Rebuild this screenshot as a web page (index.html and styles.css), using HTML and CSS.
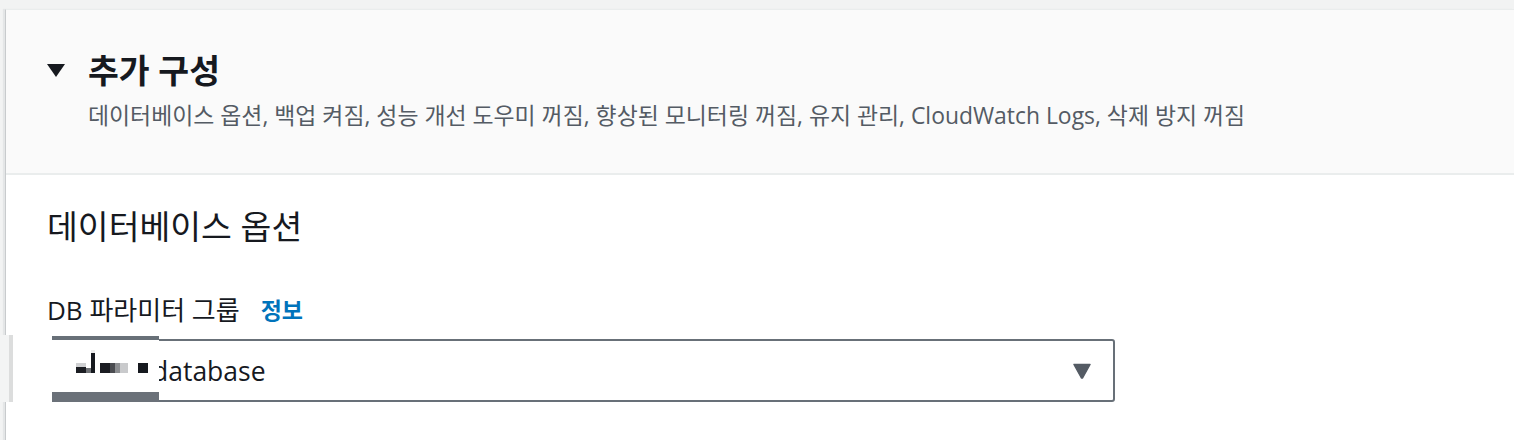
FILE: index.html
```html
<!DOCTYPE html>
<html lang="ko">
<head>
<meta charset="utf-8">
<title>추가 구성</title>
<link rel="stylesheet" href="styles.css">
</head>
<body>
<div class="page">
  <section class="panel">
    <header class="panel-header">
      <div class="title-row">
        <span class="caret" aria-hidden="true"></span>
        <h2 class="title">추가 구성</h2>
      </div>
      <p class="subtitle">데이터베이스 옵션, 백업 켜짐, 성능 개선 도우미 꺼짐, 향상된 모니터링 꺼짐, 유지 관리, CloudWatch Logs, 삭제 방지 꺼짐</p>
    </header>
    <div class="panel-body">
      <div class="edge-artifact" aria-hidden="true"></div>
      <h3 class="section-title">데이터베이스 옵션</h3>
      <div class="field-label">
        <span class="label-text">DB 파라미터 그룹</span>
        <a class="info-link">정보</a>
      </div>
      <div class="select">
        <span class="select-value">database</span>
        <svg class="select-caret" width="20" height="16" viewBox="0 0 20 16" aria-hidden="true">
          <path d="M2 1.5 H18 L10.8 14.5 Q10 15.6 9.2 14.5 Z" fill="#545b64" stroke="#545b64" stroke-width="1.5" stroke-linejoin="round"/>
        </svg>
        <div class="redact" aria-hidden="true">
          <svg width="107" height="66" viewBox="0 0 107 66">
            <rect x="0" y="0" width="107" height="4" fill="#687078"/>
            <rect x="0" y="56" width="107" height="10" fill="#6b7179"/>
            <rect x="24" y="27" width="10" height="4" fill="#cfd0d2"/>
            <rect x="24" y="31" width="10" height="6" fill="#1b1d22"/>
            <rect x="34" y="32" width="5" height="5" fill="#707276"/>
            <rect x="39" y="14" width="4" height="3" fill="#ececec"/>
            <rect x="39" y="17" width="4" height="20" fill="#16191f"/>
            <rect x="48" y="27" width="10" height="10" fill="#1b1d22"/>
            <rect x="58" y="27" width="5" height="10" fill="#4a4c50"/>
            <rect x="63" y="27" width="5" height="10" fill="#8c8e91"/>
            <rect x="68" y="27" width="8" height="10" fill="#c9cacc"/>
            <rect x="86" y="27" width="10" height="10" fill="#16191f"/>
          </svg>
        </div>
      </div>
    </div>
  </section>
</div>
</body>
</html>
```
FILE: styles.css
```css
* { box-sizing: border-box; }
html, body { margin: 0; padding: 0; }
body {
  background: #f2f3f3;
  font-family: "Open Sans", "Noto Sans CJK KR", sans-serif;
  color: #16191f;
  height: 440px;
  overflow: hidden;
}
.page {
  padding-top: 9px;
  padding-left: 5px;
}
.panel {
  background: #ffffff;
  border-top: 1px solid #eaeded;
  border-left: 1px solid #c8cbcd;
  box-shadow: -2px 0 1px #e4e6e7;
  min-height: 440px;
}
.panel-header {
  background: #fafafa;
  height: 165px;
  border-bottom: 2px solid #eaeded;
  padding: 40px 0 0 41px;
}
.title-row {
  display: flex;
  align-items: center;
  gap: 23px;
  height: 40px;
}
.caret {
  width: 0;
  height: 0;
  border-left: 9px solid transparent;
  border-right: 9px solid transparent;
  border-top: 13px solid #16191f;
  margin-top: 1px;
}
.title {
  margin: 0;
  font-size: 33.5px;
  line-height: 40px;
  font-weight: 700;
}
.subtitle {
  margin: 12px 0 0 41px;
  font-size: 22.9px;
  line-height: 28px;
  color: #545b64;
  white-space: nowrap;
}
.panel-body {
  position: relative;
  padding: 31px 0 40px 41px;
}
.edge-artifact {
  position: absolute;
  left: -7px;
  top: 160px;
  width: 14px;
  height: 67px;
  background: #f3f4f4;
  border-right: 4px solid #dcdddd;
}
.section-title {
  margin: 0;
  font-size: 33.5px;
  line-height: 40px;
  font-weight: 400;
}
.field-label {
  margin-top: 49px;
  display: flex;
  align-items: center;
  gap: 21px;
  height: 30px;
}
.label-text {
  font-size: 26px;
  line-height: 30px;
}
.info-link {
  font-size: 23px;
  font-weight: 700;
  color: #0073bb;
  line-height: 30px;
}
.select {
  position: relative;
  margin: 14px 0 0 5px;
  width: 1063px;
  height: 63px;
  border: 2px solid #687078;
  border-radius: 3px;
  background: #fff;
  display: flex;
  align-items: center;
  justify-content: space-between;
  padding: 0 21px 0 98px;
}
.select-value {
  font-size: 26.5px;
  line-height: 30px;
  color: #16191f;
}
.select-caret { display: block; }
.redact {
  position: absolute;
  left: -2px;
  top: -5px;
  width: 107px;
  height: 66px;
  background: #fff;
}
.redact svg { display: block; }
```
